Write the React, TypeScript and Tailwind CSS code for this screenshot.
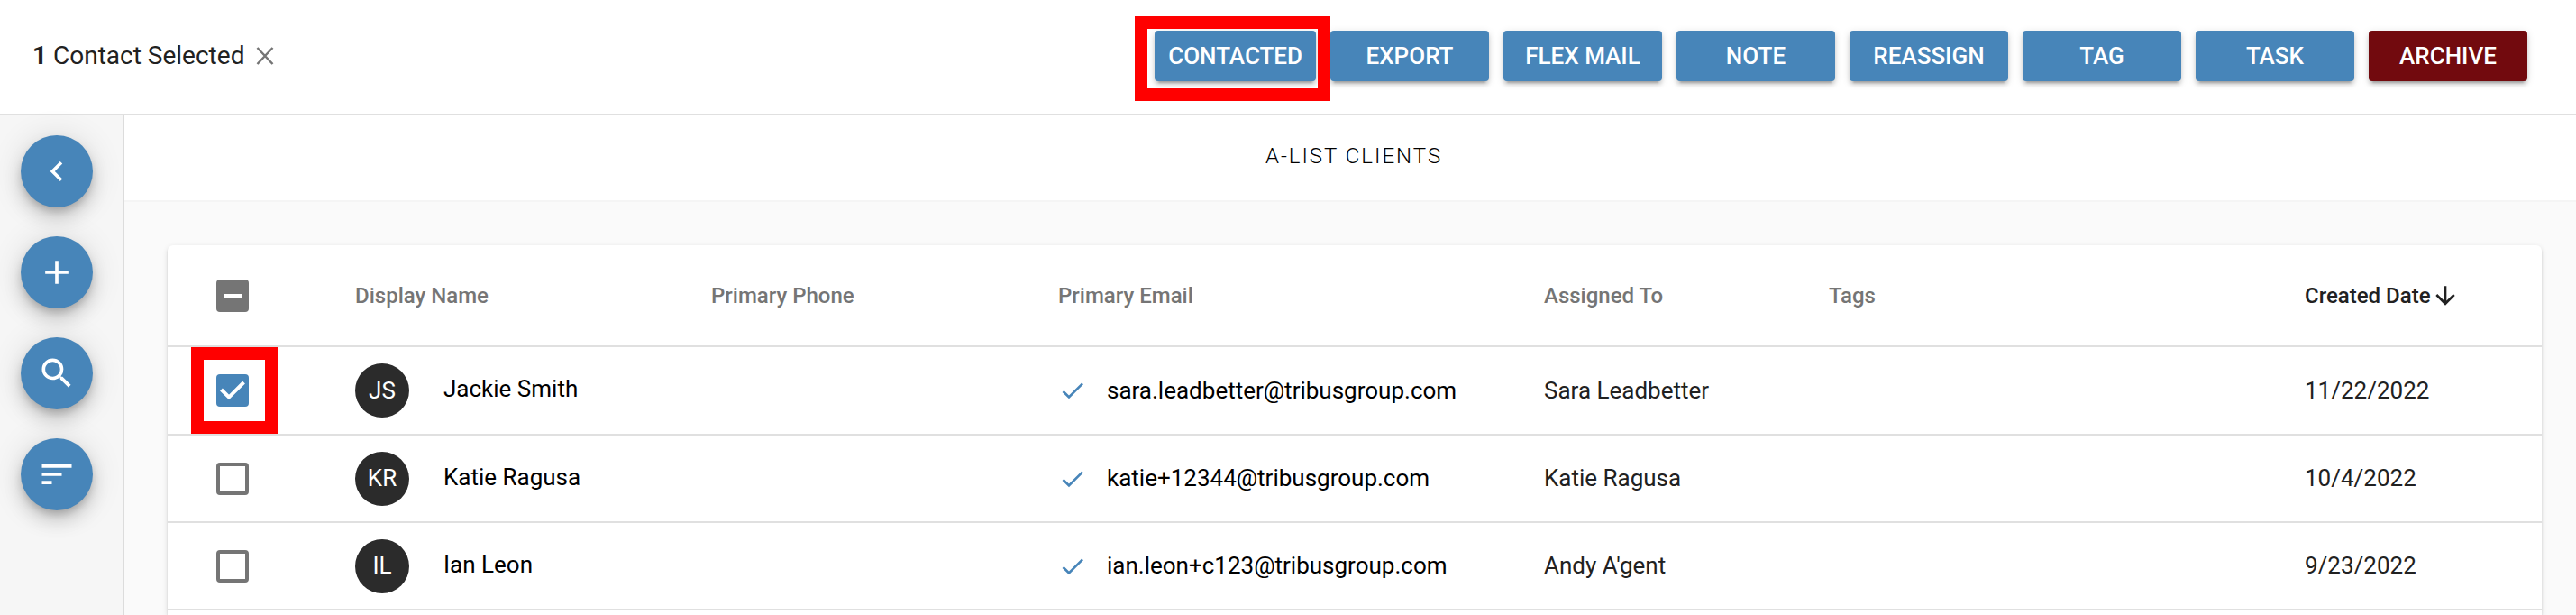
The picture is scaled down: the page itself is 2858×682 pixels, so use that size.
import { useState } from 'react';
import { MdAdd, MdArrowDownward, MdCheck, MdChevronLeft, MdSearch, MdSort } from 'react-icons/md';

type Contact = { initials: string; name: string; email: string; assignedTo: string; created: string };

const contacts: Contact[] = [
  { initials: 'JS', name: 'Jackie Smith', email: 'sara.leadbetter@tribusgroup.com', assignedTo: 'Sara Leadbetter', created: '11/22/2022' },
  { initials: 'KR', name: 'Katie Ragusa', email: 'katie+12344@tribusgroup.com', assignedTo: 'Katie Ragusa', created: '10/4/2022' },
  { initials: 'IL', name: 'Ian Leon', email: 'ian.leon+c123@tribusgroup.com', assignedTo: "Andy A'gent", created: '9/23/2022' },
];

const actions = ['Export', 'Flex Mail', 'Note', 'Reassign', 'Tag', 'Task'];

const sideItems = [
  { label: 'Back', icon: <MdChevronLeft size={44} /> },
  { label: 'Add contact', icon: <MdAdd size={44} /> },
  { label: 'Search', icon: <MdSearch size={44} /> },
  { label: 'Filter', icon: <MdSort size={44} /> },
];

const buttonShadow = 'shadow-[0_6px_2px_-4px_rgba(0,0,0,0.2),0_4px_4px_0_rgba(0,0,0,0.14),0_2px_10px_0_rgba(0,0,0,0.12)]';

function ActionButton({ label, danger = false }: { label: string; danger?: boolean }) {
  return (
    <button
      className={`h-14 min-w-44 px-[15px] rounded text-[26px] font-medium text-white uppercase whitespace-nowrap ${buttonShadow} ${
        danger ? 'bg-[#720a0e]' : 'bg-[#4785b9]'
      }`}
    >
      {label}
    </button>
  );
}

type CheckboxProps = { label: string; checked: boolean; mixed?: boolean; onChange: () => void };

function Checkbox({ label, checked, mixed = false, onChange }: CheckboxProps) {
  return (
    <span className="relative block size-9">
      <input
        type="checkbox"
        aria-label={label}
        checked={checked}
        onChange={onChange}
        className={`block size-9 appearance-none rounded-[4px] ${
          mixed ? 'bg-[#757575]' : checked ? 'bg-[#4785b9]' : 'bg-white border-4 border-[#757575]'
        }`}
      />
      {(mixed || checked) && (
        <svg viewBox="0 0 36 36" className="absolute inset-0 pointer-events-none" fill="none" stroke="white" strokeWidth="4">
          <path d={mixed ? 'M8 18H28' : 'M5.5 17L14 25.5L30.5 9'} />
        </svg>
      )}
    </span>
  );
}

export default function App() {
  const [selected, setSelected] = useState<string[]>(['JS']);

  const toggle = (id: string) =>
    setSelected(selected.includes(id) ? selected.filter((s) => s !== id) : [...selected, id]);
  const allSelected = selected.length === contacts.length;

  return (
    <div className="min-h-screen flex flex-col bg-[#fafafa] font-[Roboto,sans-serif] text-[#212121]">
      {/* Selection bar */}
      <header className="flex items-center justify-between h-32 pl-9 pr-[54px] pb-[2px] bg-white border-b-2 border-[#e0e0e0]">
        <div className="flex items-center gap-2 text-[28px]">
          <span>
            <b className="font-bold">{selected.length}</b> Contact Selected
          </span>
          <button aria-label="Clear selection" onClick={() => setSelected([])}>
            <svg width="32" height="32" viewBox="0 0 32 32" fill="none" stroke="#757575" strokeWidth="2.5">
              <path d="M6.5 7L23.5 25M23.5 7L6.5 25" />
            </svg>
          </button>
        </div>
        <div className="flex items-center gap-4">
          <div className="relative">
            <ActionButton label="Contacted" />
            <div className="absolute -left-[22px] -right-4 -top-4 -bottom-[22px] border-[14px] border-[#ff0000] pointer-events-none" />
          </div>
          {actions.map((label) => (
            <ActionButton key={label} label={label} />
          ))}
          <ActionButton label="Archive" danger />
        </div>
      </header>

      <div className="flex flex-1">
        <aside className="flex flex-col items-center gap-8 w-[138px] shrink-0 pt-[22px] pr-[10px] bg-[#f6f6f6] border-r-2 border-[#dcdcdc]">
          {sideItems.map(({ label, icon }) => (
            <button
              key={label}
              aria-label={label}
              className="flex items-center justify-center size-20 rounded-full bg-[#4785b9] text-white shadow-[0_6px_10px_-2px_rgba(0,0,0,0.2),0_12px_20px_0_rgba(0,0,0,0.14),0_2px_36px_0_rgba(0,0,0,0.12)]"
            >
              {icon}
            </button>
          ))}
        </aside>

        <main className="flex flex-col flex-1 min-w-0">
          <h1 className="flex items-center justify-center h-24 pl-2 pb-1 bg-white border-b-2 border-[#f5f5f5] text-[24px] font-light uppercase tracking-[2px] text-black">
            A-List Clients
          </h1>

          {/* Contacts */}
          <div className="flex-1 mt-12 ml-12 mr-[38px] rounded-t-md bg-white shadow-[0_4px_2px_-2px_rgba(0,0,0,0.2),0_2px_2px_0_rgba(0,0,0,0.14),0_2px_6px_0_rgba(0,0,0,0.12)]">
            <table className="w-full border-separate border-spacing-0 text-left text-[26px] [&_td]:border-b-2 [&_td]:border-[#e0e0e0] [&_td]:p-0 [&_th]:border-b-2 [&_th]:border-[#e0e0e0] [&_th]:p-0">
              <thead>
                <tr className="h-[113px] text-[24px] text-[#757575] [&_th]:font-medium">
                  <th className="w-[208px]">
                    <div className="pl-[54px]">
                      <Checkbox
                        label="Select all"
                        checked={allSelected}
                        mixed={selected.length > 0 && !allSelected}
                        onChange={() => setSelected(allSelected ? [] : contacts.map((c) => c.initials))}
                      />
                    </div>
                  </th>
                  <th className="w-[395px]">Display Name</th>
                  <th className="w-[385px]">Primary Phone</th>
                  <th className="w-[539px]">Primary Email</th>
                  <th className="w-[316px]">Assigned To</th>
                  <th className="w-[528px]">Tags</th>
                  <th className="w-[263px] text-[#212121]" aria-sort="descending">
                    <button className="flex items-center">
                      Created Date
                      <MdArrowDownward size={32} />
                    </button>
                  </th>
                </tr>
              </thead>
              <tbody>
                {contacts.map((c, i) => (
                  <tr key={c.initials} className="h-[97px] first:h-[98px]">
                    <td>
                      <div className="pl-[54px]">
                        <div className="relative size-9">
                          <Checkbox label={`Select ${c.name}`} checked={selected.includes(c.initials)} onChange={() => toggle(c.initials)} />
                          {i === 0 && (
                            <div className="absolute -left-7 -right-8 -top-[30px] -bottom-[30px] border-[14px] border-[#ff0000] pointer-events-none" />
                          )}
                        </div>
                      </div>
                    </td>
                    <td>
                      <div className="flex items-center gap-[38px] text-black">
                        <span className="flex items-center justify-center size-[60px] rounded-full bg-[#2b2b2b] text-white">{c.initials}</span>
                        <span className="pb-[3px]">{c.name}</span>
                      </div>
                    </td>
                    <td />
                    <td>
                      <div className="flex items-center gap-[22px] text-black">
                        <MdCheck size={32} className="text-[#4785b9]" />
                        {c.email}
                      </div>
                    </td>
                    <td>{c.assignedTo}</td>
                    <td />
                    <td>{c.created}</td>
                  </tr>
                ))}
              </tbody>
            </table>
          </div>
        </main>
      </div>
    </div>
  );
}
